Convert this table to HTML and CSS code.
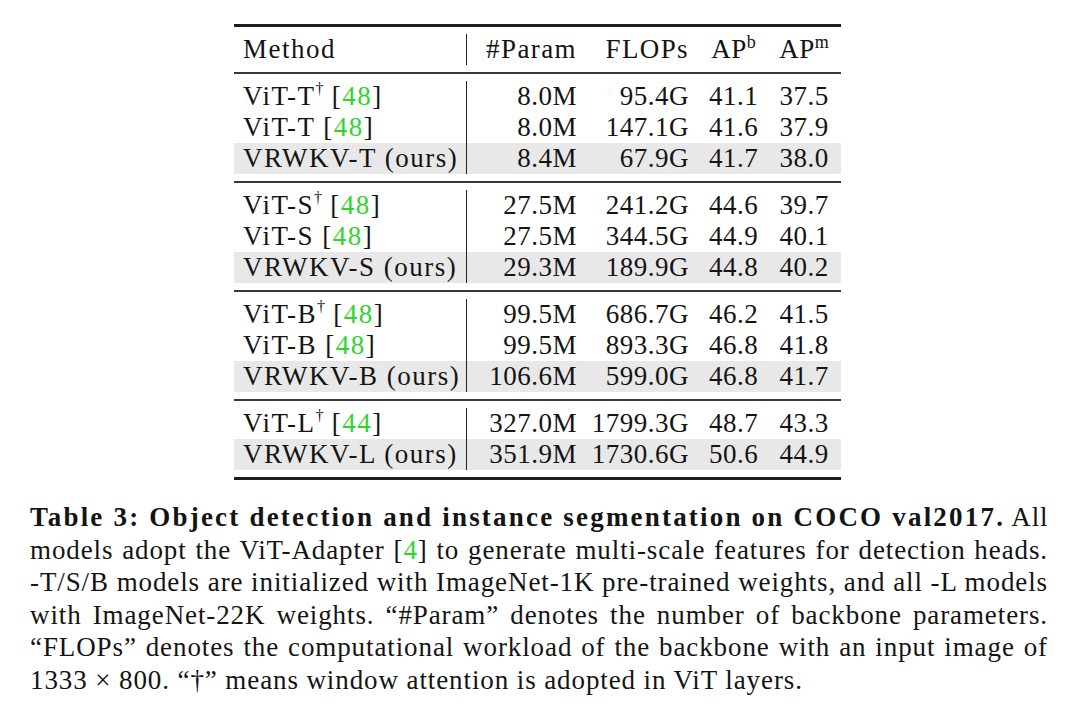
FILE: index.html
```html
<!DOCTYPE html>
<html>
<head>
<meta charset="utf-8">
<link rel="stylesheet" href="styles.css">
</head>
<body>
<div class="page">
  <div class="tbl">
    <div class="grp head">
      <div class="row">
        <div class="c m">Method</div>
        <div class="c r">#Param</div>
        <div class="c r f">FLOPs</div>
        <div class="c ctr">AP<sup>b</sup></div>
        <div class="c ctr">AP<sup>m</sup></div>
      </div>
    </div>
    <div class="grp">
      <div class="row">
        <div class="c m">ViT-T<sup class="dg">†</sup> [<span class="g">48</span>]</div>
        <div class="c r">8.0M</div><div class="c r f">95.4G</div><div class="c ctr">41.1</div><div class="c ctr">37.5</div>
      </div>
      <div class="row">
        <div class="c m">ViT-T [<span class="g">48</span>]</div>
        <div class="c r">8.0M</div><div class="c r f">147.1G</div><div class="c ctr">41.6</div><div class="c ctr">37.9</div>
      </div>
      <div class="row hl">
        <div class="c m">VRWKV-T (ours)</div>
        <div class="c r">8.4M</div><div class="c r f">67.9G</div><div class="c ctr">41.7</div><div class="c ctr">38.0</div>
      </div>
    </div>
    <div class="grp">
      <div class="row">
        <div class="c m">ViT-S<sup class="dg">†</sup> [<span class="g">48</span>]</div>
        <div class="c r">27.5M</div><div class="c r f">241.2G</div><div class="c ctr">44.6</div><div class="c ctr">39.7</div>
      </div>
      <div class="row">
        <div class="c m">ViT-S [<span class="g">48</span>]</div>
        <div class="c r">27.5M</div><div class="c r f">344.5G</div><div class="c ctr">44.9</div><div class="c ctr">40.1</div>
      </div>
      <div class="row hl">
        <div class="c m">VRWKV-S (ours)</div>
        <div class="c r">29.3M</div><div class="c r f">189.9G</div><div class="c ctr">44.8</div><div class="c ctr">40.2</div>
      </div>
    </div>
    <div class="grp">
      <div class="row">
        <div class="c m">ViT-B<sup class="dg">†</sup> [<span class="g">48</span>]</div>
        <div class="c r">99.5M</div><div class="c r f">686.7G</div><div class="c ctr">46.2</div><div class="c ctr">41.5</div>
      </div>
      <div class="row">
        <div class="c m">ViT-B [<span class="g">48</span>]</div>
        <div class="c r">99.5M</div><div class="c r f">893.3G</div><div class="c ctr">46.8</div><div class="c ctr">41.8</div>
      </div>
      <div class="row hl">
        <div class="c m">VRWKV-B (ours)</div>
        <div class="c r">106.6M</div><div class="c r f">599.0G</div><div class="c ctr">46.8</div><div class="c ctr">41.7</div>
      </div>
    </div>
    <div class="grp last">
      <div class="row">
        <div class="c m">ViT-L<sup class="dg">†</sup> [<span class="g">44</span>]</div>
        <div class="c r">327.0M</div><div class="c r f">1799.3G</div><div class="c ctr">48.7</div><div class="c ctr">43.3</div>
      </div>
      <div class="row hl">
        <div class="c m">VRWKV-L (ours)</div>
        <div class="c r">351.9M</div><div class="c r f">1730.6G</div><div class="c ctr">50.6</div><div class="c ctr">44.9</div>
      </div>
    </div>
  </div>

  <div class="caption">
    <div class="ln"><b>Table 3: Object detection and instance segmentation on COCO val2017.</b> All</div>
    <div class="ln">models adopt the ViT-Adapter [<span class="g">4</span>] to generate multi-scale features for detection heads.</div>
    <div class="ln">-T/S/B models are initialized with ImageNet-1K pre-trained weights, and all -L models</div>
    <div class="ln">with ImageNet-22K weights. “#Param” denotes the number of backbone parameters.</div>
    <div class="ln">“FLOPs” denotes the computational workload of the backbone with an input image of</div>
    <div class="ln end">1333 × 800. “†” means window attention is adopted in ViT layers.</div>
  </div>
</div>
</body>
</html>
```

FILE: styles.css
```css
html, body {
  margin: 0;
  padding: 0;
  background: #ffffff;
}

body {
  font-family: "Liberation Serif", "Times New Roman", serif;
  color: #141414;
}

.page {
  width: 1080px;
  height: 719px;
  overflow: hidden;
  padding-top: 24px;
  box-sizing: border-box;
}

.tbl {
  margin-left: 234px;
  width: 607px;
  border-top: 3px solid #1c1c1c;
  border-bottom: 3px solid #1c1c1c;
  font-size: 27px;
  letter-spacing: 0.5px;
}

.grp {
  padding: 7px 0;
  border-top: 2px solid #3a3a3a;
}

.grp.head {
  border-top: none;
}

.row {
  display: grid;
  grid-template-columns: 233px 116px 117px 67px 74px;
  height: 31px;
  line-height: 31px;
}

.row.hl {
  background: #e8e8e8;
}

.c {
  white-space: nowrap;
}

.c.m {
  padding-left: 9px;
  border-right: 1px solid #222;
  letter-spacing: 1.5px;
}

.c.r {
  text-align: right;
  padding-right: 6px;
}

.c.r.f {
  padding-right: 11px;
}

.c.ctr {
  text-align: center;
}

.head .c.r:first-of-type,
.head .c.r {
  letter-spacing: 1.4px;
}

sup {
  font-size: 18px;
  line-height: 0;
  vertical-align: 10px;
  letter-spacing: 0;
}

sup.dg {
  font-size: 16px;
  vertical-align: 11px;
}

.g {
  color: #2fd42f;
}

.caption {
  margin: 21px 0 0 30px;
  width: 1018px;
  font-size: 27px;
  line-height: 32.6px;
  letter-spacing: 0.9px;
}

.ln {
  text-align: justify;
  text-align-last: justify;
  white-space: nowrap;
}

.ln.end {
  text-align-last: left;
}

.ln b {
  letter-spacing: 2.2px;
}
```
